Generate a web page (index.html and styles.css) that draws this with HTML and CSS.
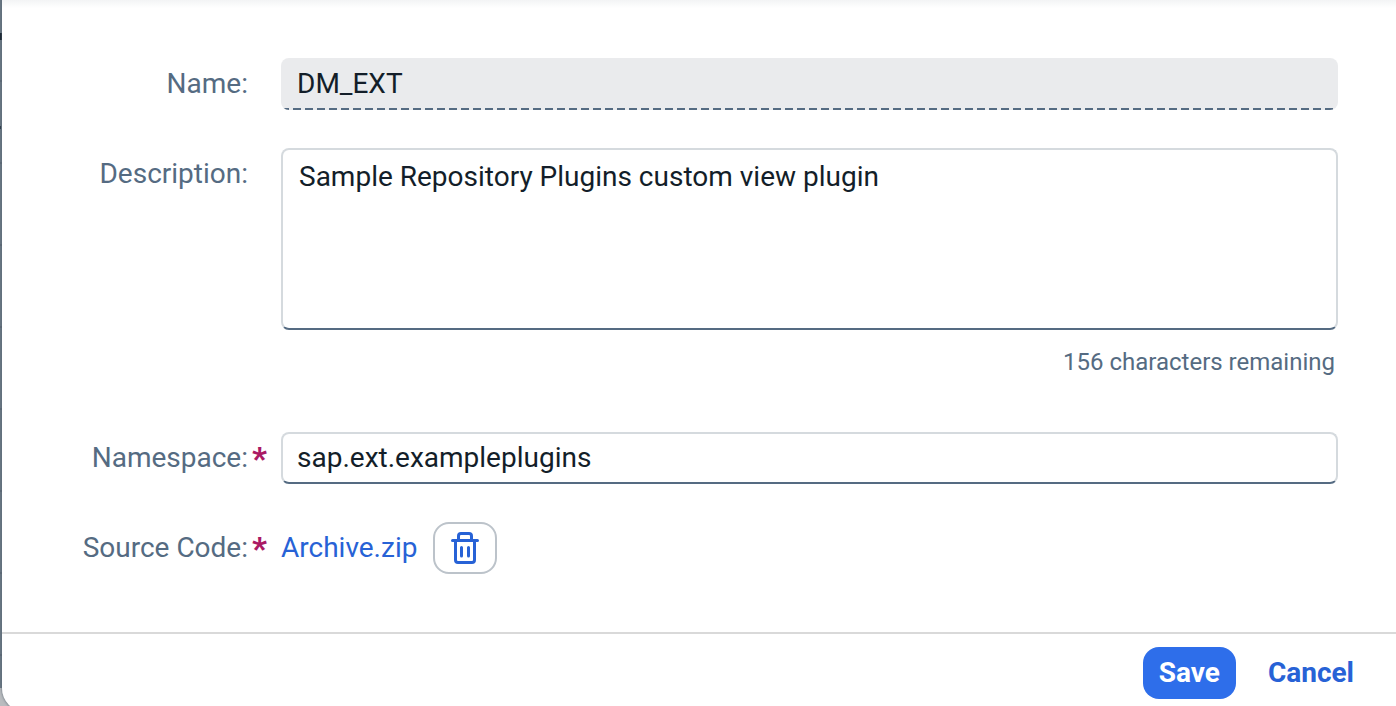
FILE: index.html
```html
<!DOCTYPE html>
<html lang="en">
<head>
<meta charset="utf-8">
<meta name="viewport" content="width=device-width, initial-scale=1">
<title>Edit Extension</title>
<link rel="stylesheet" href="styles.css">
</head>
<body>
<form class="dialog" onsubmit="return false">
  <div class="form">
    <label class="label" for="name">Name:</label>
    <input class="field field-readonly" id="name" type="text" value="DM_EXT" readonly>

    <label class="label" for="description">Description:</label>
    <div class="description">
      <textarea class="field field-area" id="description">Sample Repository Plugins custom view plugin</textarea>
      <p class="counter">156 characters remaining</p>
    </div>

    <label class="label label-required" for="namespace">Namespace:</label>
    <input class="field" id="namespace" type="text" value="sap.ext.exampleplugins" required>

    <label class="label label-required" for="archive">Source Code:</label>
    <div class="source">
      <a class="link" id="archive" href="#">Archive.zip</a>
      <button class="icon-button" type="button" aria-label="Delete">
        <svg class="icon" viewBox="0 0 32 32" width="32" height="32" fill="none" stroke="currentColor" stroke-width="3" stroke-linecap="round" stroke-linejoin="round">
          <path d="M3.500 8.500H28.500M9.500 8V4Q9.500 1.500 12 1.500H20Q22.500 1.500 22.500 4V8M6.500 9V28Q6.500 30.500 9 30.500H23Q25.500 30.500 25.500 28V9M12.500 15.500V24M19.500 15.500V24"/>
        </svg>
      </button>
    </div>
  </div>
  <footer class="footer">
    <button class="button button-primary" type="submit">Save</button>
    <button class="button" type="button">Cancel</button>
  </footer>
</form>
</body>
</html>
```

FILE: styles.css
```css
* {
  box-sizing: border-box;
}

html {
  height: 100%;
  overflow: hidden;
}

body {
  min-height: 100%;
  margin: 0;
  padding-left: 2px;
  background:
    linear-gradient(#17222e, #17222e) 0 33px / 2px 7px no-repeat,
    linear-gradient(#2c3a48, #2c3a48) 0 126px / 1px 3px no-repeat,
    repeating-linear-gradient(#5e6b78 0 2px, transparent 2px 82px) 0 80px / 2px 608px no-repeat,
    linear-gradient(#6b7985, #6b7985) 0 0 / 2px 688px no-repeat,
    #b9bcbf;
  color: #131e29;
  font-family: Roboto, "Liberation Sans", sans-serif;
  font-size: 28px;
  line-height: 32px;
}

.dialog {
  display: flex;
  flex-direction: column;
  min-height: calc(100vh + 6px);
  border-radius: 0 0 0 24px;
  background: linear-gradient(#f3f4f5, #fff 8px);
  box-shadow: 0 0 2px 1px rgba(85, 98, 112, 0.5);
}

.form {
  display: grid;
  flex: 1;
  grid-template-columns: 246px 1fr;
  column-gap: 33px;
  row-gap: 38px;
  align-content: start;
  padding: 58px 58px;
  padding-left: 0;
}

.label {
  position: relative;
  padding-top: 10px;
  color: #556b82;
  text-align: right;
}

.label-required::after {
  content: "*";
  position: absolute;
  left: 100%;
  margin-left: 4px;
  color: #aa1a64;
  font-size: 32px;
  font-weight: 900;
}

.field {
  display: block;
  width: 100%;
  height: 52px;
  margin: 0;
  padding: 0 14px 2px;
  border: 2px solid #d5dade;
  border-bottom-color: #556b82;
  border-radius: 8px;
  outline: 0;
  background: #fff;
  color: inherit;
  font: inherit;
}

.field-readonly {
  border-color: transparent;
  background:
    repeating-linear-gradient(90deg, #556b82 0 8px, transparent 8px 12px) 0 100% / 100% 2px no-repeat border-box,
    #eaebed border-box;
}

.field-area {
  height: 182px;
  padding: 11px 16px;
  resize: none;
}

.counter {
  margin: 16px 3px 0 0;
  padding-bottom: 16px;
  color: #556b82;
  font-size: 24px;
  text-align: right;
}

.source {
  display: flex;
  align-items: center;
  gap: 16px;
}

.link {
  color: #2762d6;
  text-decoration: none;
}

.icon-button {
  display: flex;
  align-items: center;
  justify-content: center;
  width: 64px;
  height: 52px;
  padding: 0;
  border: 2px solid #bcc3ca;
  border-radius: 16px;
  background: #fff;
  color: #2762d6;
}

.icon {
  display: block;
}

.footer {
  display: flex;
  justify-content: flex-end;
  gap: 16px;
  padding: 13px 26px;
  border-top: 2px solid #d9d9d9;
}

.button {
  height: 52px;
  padding: 0 16px;
  border: 0;
  border-radius: 16px;
  background: transparent;
  color: #2762d6;
  font: inherit;
  font-weight: 700;
}

.button-primary {
  background: #2e6eea;
  color: #fff;
}
```
